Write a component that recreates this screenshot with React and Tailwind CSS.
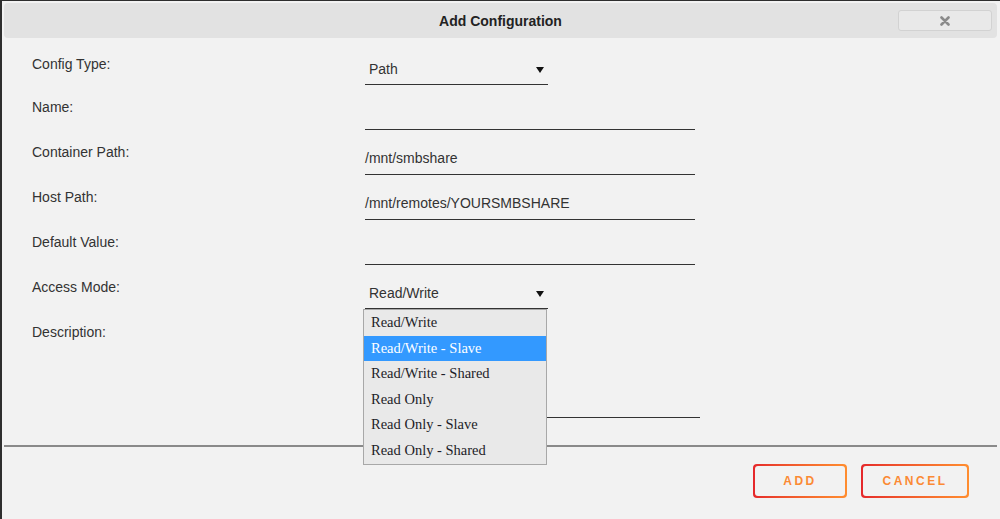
import React from "react";

const sans = { fontFamily: '"Liberation Sans", Arial, sans-serif' };
const serif = { fontFamily: '"Liberation Serif", "Times New Roman", serif' };

function Arrow() {
  return (
    <svg width="8" height="8" viewBox="0 0 8 8" className="block">
      <path d="M0 1 H8 L4 7 Z" fill="#111" />
    </svg>
  );
}

function Row({ label, children, h = 45 }) {
  return (
    <div className="flex items-start" style={{ height: h }}>
      <div className="w-[363px] pl-[30px] leading-[20px] text-[14px] text-[#333]">{label}</div>
      {children}
    </div>
  );
}

function TextField({ value, w = 330 }) {
  return (
    <div
      className="h-[33px] border-b border-[#333] pt-[6px] leading-[20px] text-[14px] text-[#333] box-border"
      style={{ width: w }}
    >
      {value}
    </div>
  );
}

const options = [
  "Read/Write",
  "Read/Write - Slave",
  "Read/Write - Shared",
  "Read Only",
  "Read Only - Slave",
  "Read Only - Shared",
];

function GradButton({ label, w }) {
  return (
    <div
      className="h-[34px] rounded-[4px] p-[2px] bg-gradient-to-r from-[#e5272b] to-[#ff8d2f]"
      style={{ width: w }}
    >
      <div className="w-full h-full rounded-[3px] bg-[#f2f2f2] flex items-center justify-center">
        <span className="text-[12px] font-bold tracking-[2.5px] text-[#fb8a34]">{label}</span>
      </div>
    </div>
  );
}

export default function App() {
  return (
    <div
      className="w-[1000px] h-[519px] bg-[#f2f2f2] border-t border-l-2 border-[#2e2e2e] box-border overflow-hidden flex flex-col"
      style={sans}
    >
      {/* Title bar */}
      <div className="ml-[2px] mr-[3px] mt-[2px] h-[35px] rounded-[4px] bg-[#e2e2e2] grid grid-cols-[1fr_auto_1fr] items-center">
        <div />
        <div className="text-[14px] font-bold text-[#222] pt-[2px]">Add Configuration</div>
        <div className="flex justify-end pr-[5px]">
          <div className="w-[94px] h-[21px] rounded-[3px] border border-[#d2d2d2] bg-[#e9e9e9] flex items-center justify-center">
            <svg width="10" height="10" viewBox="0 0 10 10">
              <path d="M1.5 1.5 L8.5 8.5 M8.5 1.5 L1.5 8.5" stroke="#8a8a8a" strokeWidth="2.6" strokeLinecap="round" />
            </svg>
          </div>
        </div>
      </div>

      {/* Form */}
      <div className="pt-[16px] flex flex-col">
        <Row label="Config Type:" h={43}>
          <div className="w-[183px] h-[31px] border-b border-[#333] pt-[5px] pl-[4px] pr-[4px] flex items-start justify-between box-border">
            <span className="leading-[20px] text-[14px] text-[#333]">Path</span>
            <span className="pt-[7px]"><Arrow /></span>
          </div>
        </Row>
        <Row label="Name:">
          <TextField value="" />
        </Row>
        <Row label="Container Path:">
          <TextField value="/mnt/smbshare" />
        </Row>
        <Row label="Host Path:">
          <TextField value="/mnt/remotes/YOURSMBSHARE" />
        </Row>
        <Row label="Default Value:">
          <TextField value="" />
        </Row>
        <Row label="Access Mode:">
          <div className="relative w-[183px]">
            <div className="h-[32px] border-b border-[#333] pt-[6px] pl-[4px] pr-[4px] flex items-start justify-between box-border">
              <span className="leading-[20px] text-[14px] text-[#333]">Read/Write</span>
              <span className="pt-[7px]"><Arrow /></span>
            </div>
            <div
              className="absolute left-[-2px] top-[32px] w-[184px] border border-[#a8a8a8] bg-[#e9e9e9] z-10"
              style={serif}
            >
              {options.map((o, i) => (
                <div
                  key={o}
                  className={
                    "h-[25.6px] flex items-center pl-[7px] text-[14.5px] " +
                    (i === 1 ? "bg-[#3399ff] text-white" : "text-[#1d1d28]")
                  }
                >
                  {o}
                </div>
              ))}
            </div>
          </div>
        </Row>
        <Row label="Description:" h={96}>
          <div className="w-[335px] h-[96px] border-b border-[#333] box-border" />
        </Row>
      </div>

      {/* Separator */}
      <div className="mt-[27px] ml-[2px] mr-[3px] h-[2px] bg-[#8a8a8a]" />

      {/* Buttons */}
      <div className="mt-[17px] flex justify-end gap-[14px] pr-[31px]">
        <GradButton label="ADD" w={94} />
        <GradButton label="CANCEL" w={108} />
      </div>
    </div>
  );
}
